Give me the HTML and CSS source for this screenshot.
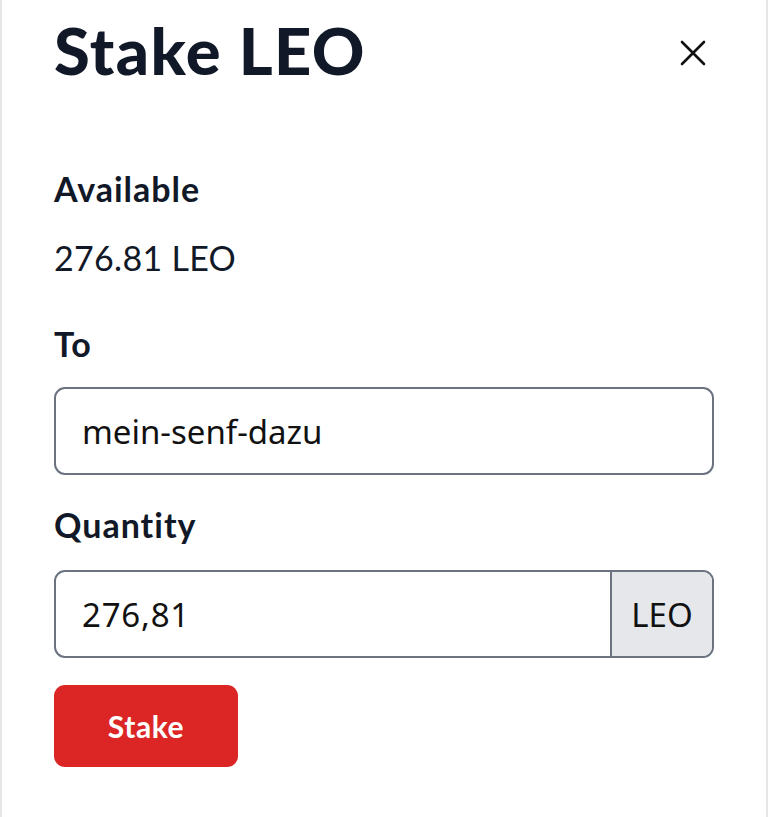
FILE: index.html
```html
<!DOCTYPE html>
<html lang="en">
<head>
<meta charset="utf-8">
<title>Stake LEO</title>
<link rel="stylesheet" href="styles.css">
</head>
<body>
<div class="panel">
  <div class="header">
    <h1 class="title">Stake LEO</h1>
    <button class="close" aria-label="Close">
      <svg width="28" height="28" viewBox="0 0 28 28" fill="none" stroke="#111111" stroke-width="2.6" stroke-linecap="round">
        <path d="M3 3 L25 25 M25 3 L3 25"/>
      </svg>
    </button>
  </div>
  <div class="label label-first">Available</div>
  <div class="value">276.81 LEO</div>
  <div class="label label-to">To</div>
  <div class="field">
    <span class="field-text">mein-senf-dazu</span>
  </div>
  <div class="label label-qty">Quantity</div>
  <div class="field field-group">
    <span class="field-text field-grow">276,81</span>
    <span class="addon">LEO</span>
  </div>
  <button class="stake">Stake</button>
</div>
</body>
</html>
```
FILE: styles.css
```css
html, body {
  margin: 0;
  padding: 0;
  background: #ffffff;
}
body {
  font-family: "Lato", "Noto Sans", sans-serif;
  color: #111827;
}
.panel {
  box-sizing: border-box;
  height: 817px;
  border-left: 2px solid #e6e6e6;
  border-right: 2px solid #e6e6e6;
  padding: 12px 52px 0 52px;
}
.header {
  display: flex;
  align-items: center;
  justify-content: space-between;
  height: 77px;
}
.title {
  margin: 0;
  font-size: 65px;
  line-height: 77px;
  font-weight: 900;
  color: #111827;
  letter-spacing: 1.4px;
}
.close {
  background: none;
  border: none;
  padding: 0;
  margin-right: 7px;
  margin-top: 4px;
  width: 28px;
  height: 28px;
  display: flex;
}
.label {
  font-size: 34px;
  line-height: 48px;
  font-weight: 700;
  letter-spacing: 1px;
}
.label-first { margin-top: 76px; }
.value {
  font-size: 34px;
  line-height: 48px;
  margin-top: 21px;
  letter-spacing: 0.3px;
}
.label-to { margin-top: 38px; }
.label-qty { margin-top: 26px; }
.field {
  box-sizing: border-box;
  margin-top: 19px;
  height: 88px;
  border: 2px solid #6b7280;
  border-radius: 11px;
  display: flex;
  align-items: center;
  overflow: hidden;
}
.label-qty + .field { margin-top: 21px; }
.field-text {
  font-family: "Noto Sans", "Open Sans", sans-serif;
  font-size: 33px;
  color: #111111;
  padding-left: 26px;
}
.field-grow { flex: 1; letter-spacing: 0.8px; }
.addon {
  align-self: stretch;
  display: flex;
  align-items: center;
  justify-content: center;
  width: 100px;
  background: #e5e7eb;
  border-left: 2px solid #6b7280;
  font-family: "Noto Sans", "Open Sans", sans-serif;
  font-size: 33px;
  color: #111111;
}
.stake {
  margin-top: 27px;
  width: 184px;
  height: 82px;
  border: none;
  border-radius: 11px;
  background: #dc2626;
  color: #ffffff;
  font-family: "Lato", "Noto Sans", sans-serif;
  font-weight: 700;
  font-size: 30px;
  letter-spacing: 0.6px;
  padding: 0;
}
```
